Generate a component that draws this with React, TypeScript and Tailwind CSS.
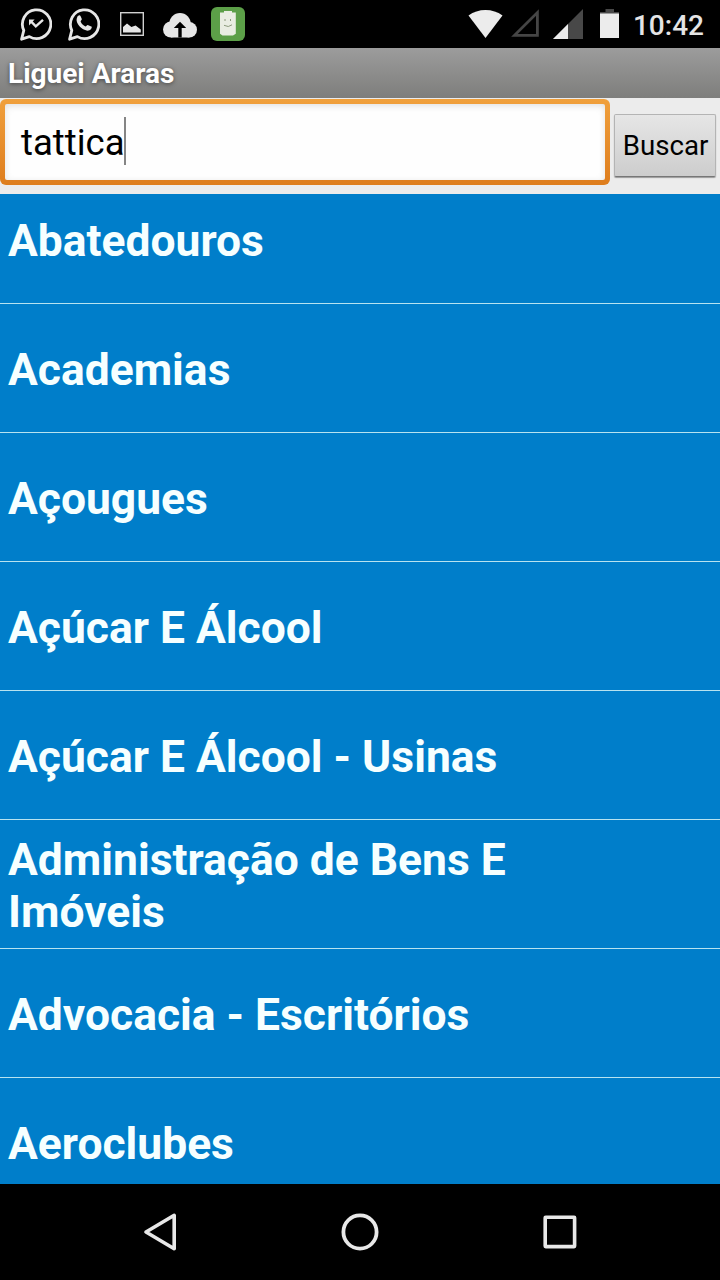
import { useState } from "react";

const categories = [
  "Abatedouros",
  "Academias",
  "Açougues",
  "Açúcar E Álcool",
  "Açúcar E Álcool - Usinas",
  "Administração de Bens E Imóveis",
  "Advocacia - Escritórios",
  "Aeroclubes",
];

function ChatBubble({ children }: { children: React.ReactNode }) {
  return (
    <svg className="w-8 h-[34px]" viewBox="0 0 32 34" fill="none">
      <path
        d="M1.6 32.2 L3.8 23.4 A14.2 14.4 0 1 1 9.4 29.6 Z"
        stroke="#e6e6e6"
        strokeWidth="2.8"
        strokeLinejoin="round"
      />
      {children}
    </svg>
  );
}

function StatusBar() {
  return (
    <div className="h-12 shrink-0 bg-black flex items-center justify-between pl-5 pr-4">
      {/* Notifications */}
      <div className="flex items-center">
        <ChatBubble>
          <path d="M9 12.4 H14.6 L9 18.4 Z" fill="#e6e6e6" />
          <path d="M11 14.4 L15.8 19.4 L23 12.8" stroke="#e6e6e6" strokeWidth="2.4" />
        </ChatBubble>
        <div className="w-4" />
        <ChatBubble>
          <path
            d="M9.2 10.2 C9.8 8.9 11 8.1 12 8.4 C12.7 8.6 13.3 10.8 13.8 12 C14 12.8 12.6 14 12.6 14.6 C13.6 17 15.2 18.5 17.4 19.5 C18.2 19.6 19 17.8 19.7 17.9 L23.8 19.8 C24 20.8 22.8 23.2 20.6 23.6 C17 24 12.2 21 10 17.3 C8.6 15.1 8 12.4 9.2 10.2 Z"
            fill="#e6e6e6"
          />
        </ChatBubble>
        <svg className="ml-5 w-6 h-6" viewBox="0 0 24 24" fill="none">
          <rect x="0.7" y="0.7" width="22.6" height="22.6" stroke="#d0d0d0" strokeWidth="1.4" />
          <path d="M3 20.5 V15 L7 11.4 L11.4 15 L15.6 13.6 L20.8 17.4 V20.5 Z" fill="#e6e6e6" />
        </svg>
        <svg className="ml-[19px] mt-0.5 w-[34px] h-[25px]" viewBox="0 0 34 25">
          <g fill="#e6e6e6">
            <circle cx="8" cy="16.5" r="8" />
            <circle cx="17" cy="10.8" r="10.8" />
            <circle cx="26.3" cy="16.8" r="7.7" />
            <rect x="8" y="14" width="18.3" height="10.5" />
          </g>
          <path d="M17 8.8 L23.2 15 H18.7 V24.5 H15.3 V15 H10.8 Z" fill="#000" />
        </svg>
        <svg className="ml-3.5 w-[34px] h-[34px]" viewBox="0 0 34 34" fill="none">
          <rect width="34" height="34" rx="6" fill="#5c9f48" />
          <path d="M13 4 H21 V5.4 H24.8 V26.8 L22 28.4 H11.5 L9 26.8 V5.4 H13 Z" fill="#e9ede2" />
          <path d="M14 12 v2 M19.5 12 v2 M13 18.3 Q17.5 21 21 17.8" stroke="#8c9a7c" strokeWidth="1" />
        </svg>
      </div>

      {/* Connection, battery and clock */}
      <div className="flex items-center">
        <svg className="w-[35px] h-[30px]" viewBox="0 0 35 30">
          <path d="M17.5 29 L0.5 6.5 Q8 1 17.5 1 Q27 1 34.5 6.5 Z" fill="#ececec" />
        </svg>
        <svg className="ml-2 w-7 h-[30px]" viewBox="0 0 28 30" fill="none">
          <path d="M26.4 3.5 V26.3 H3.5 Z" stroke="#454545" strokeWidth="2.8" />
        </svg>
        <svg className="ml-3.5 w-[30px] h-[30px]" viewBox="0 0 30 30">
          <path d="M30 0 V30 H0 Z" fill="#484848" />
          <path d="M15 15 V30 H0 Z" fill="#ececec" />
        </svg>
        <svg className="ml-[17px] w-[19px] h-[30px]" viewBox="0 0 19 30">
          <path d="M5.5 0 H14 V3 H19 V5 H0 V3 H5.5 Z" fill="#484848" />
          <rect y="4.5" width="19" height="24.5" fill="#ececec" />
        </svg>
        <span className="ml-3.5 pt-1 text-[28px] leading-8 font-medium text-[#e4e4e4]">10:42</span>
      </div>
    </div>
  );
}

function NavBar() {
  return (
    <div className="h-24 shrink-0 bg-black flex items-center justify-center">
      <button className="w-[200px] flex justify-center">
        <svg width="40" height="40" viewBox="0 0 40 40" fill="none">
          <path d="M34.2 3.3 V36.7 L6 20 Z" stroke="#e8e8e8" strokeWidth="3.6" strokeLinejoin="round" />
        </svg>
      </button>
      <button className="w-[200px] flex justify-center">
        <svg width="40" height="40" viewBox="0 0 40 40" fill="none">
          <circle cx="20" cy="20" r="16.6" stroke="#e8e8e8" strokeWidth="3.8" />
        </svg>
      </button>
      <button className="w-[200px] flex justify-center">
        <svg width="40" height="40" viewBox="0 0 40 40" fill="none">
          <rect x="5.2" y="5.2" width="29.4" height="29.4" rx="0.5" stroke="#e8e8e8" strokeWidth="3.6" strokeLinejoin="round" />
        </svg>
      </button>
    </div>
  );
}

export default function App() {
  const [query] = useState("tattica");

  return (
    <div className="w-[720px] h-[1280px] flex flex-col overflow-hidden bg-black font-['Roboto','Noto_Sans',sans-serif]">
      <StatusBar />

      <header className="h-[50px] shrink-0 flex items-center px-2 pt-0.5 bg-linear-to-b from-[#9c9c9c] to-[#7e7e7c]">
        <h1 className="text-[28px] leading-8 font-bold text-white [text-shadow:0_1px_4px_rgba(0,0,0,0.5)]">
          Liguei Araras
        </h1>
      </header>

      {/* Search */}
      <div className="h-24 shrink-0 flex items-start bg-[#ececec]">
        <div className="mt-px w-[610px] h-[86px] p-[5px] rounded-md bg-linear-to-b from-[#f0a03c] to-[#de7d1c]">
          <div className="h-full flex items-center pl-4 pb-[3px] rounded-xs bg-[#fefefe] shadow-[inset_0_2px_7px_rgba(0,0,0,0.12)]">
            <span className="pt-1.5 text-[36.5px] leading-none text-black">{query}</span>
            <span className="-ml-px w-0.5 h-12 bg-[#858585]" />
          </div>
        </div>
        <button className="mt-4 ml-1 w-[102px] h-[63px] pl-px rounded-xs border border-[#b4b4b4] border-b-[#777] bg-linear-to-b from-[#e6e6e6] to-[#cdcdcd] text-[27.7px] text-black shadow-[0_1px_1px_rgba(0,0,0,0.35)]">
          Buscar
        </button>
      </div>

      {/* Categories, scrolled slightly past the top */}
      <div className="flex-1 min-h-0 overflow-hidden bg-[#007eca]">
        <ul className="-mt-[19px]">
          {categories.map((name) => (
            <li key={name} className="h-[129px] flex items-center px-2 pt-1 border-b border-[#b8e3f0]">
              <span className="max-w-[600px] text-[44.4px] leading-[52px] font-bold text-[#f6ffff]">{name}</span>
            </li>
          ))}
        </ul>
      </div>

      <NavBar />
    </div>
  );
}
